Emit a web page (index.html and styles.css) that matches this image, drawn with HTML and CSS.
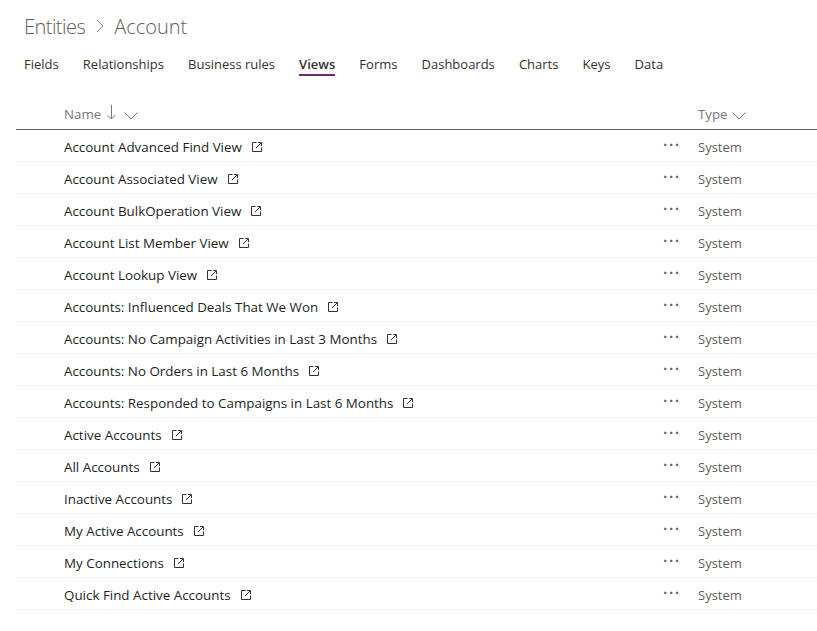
FILE: index.html
```html
<!doctype html>
<html>
<head>
<meta charset="utf-8">
<title>Account views</title>
<link rel="stylesheet" href="styles.css">
</head>
<body>
<svg class="defs" width="0" height="0">
  <symbol id="open-icon" viewBox="0 0 10 10"><path d="M4.500.5H.5v9h9V5.500M4 6 9 1M6 .5h3.500V4" /></symbol>
</svg>
<div id="wrapper">
  <h1 class="crumbs">
    <span class="crumb-first">Entities</span>
    <svg class="crumb-sep" width="8" height="14" viewBox="0 0 8 14"><path d="M1 1l6 6-6 6" /></svg>
    <span>Account</span>
  </h1>

  <ul class="tabs">
    <li>Fields</li>
    <li>Relationships</li>
    <li>Business rules</li>
    <li class="active">Views</li>
    <li>Forms</li>
    <li>Dashboards</li>
    <li>Charts</li>
    <li>Keys</li>
    <li>Data</li>
  </ul>

  <div class="head">
    <div class="col-name">
      <span>Name</span>
      <svg class="sort" width="9" height="16" viewBox="0 0 9 16"><path d="M4.500 1v14M.5 11l4 4 4-4" /></svg>
      <svg class="chev" width="14" height="8" viewBox="0 0 14 8"><path d="M.5.500 7 7 13.500.500" /></svg>
    </div>
    <div class="col-type">
      <span>Type</span>
      <svg class="chev" width="14" height="8" viewBox="0 0 14 8"><path d="M.5.500 7 7 13.500.500" /></svg>
    </div>
  </div>

  <ul class="rows">
    <li class="row"><span class="col-name"><span>Account Advanced Find View</span><svg class="open"><use href="#open-icon" /></svg></span><span class="more">···</span><span class="col-type">System</span></li>
    <li class="row"><span class="col-name"><span>Account Associated View</span><svg class="open"><use href="#open-icon" /></svg></span><span class="more">···</span><span class="col-type">System</span></li>
    <li class="row"><span class="col-name"><span>Account BulkOperation View</span><svg class="open"><use href="#open-icon" /></svg></span><span class="more">···</span><span class="col-type">System</span></li>
    <li class="row"><span class="col-name"><span>Account List Member View</span><svg class="open"><use href="#open-icon" /></svg></span><span class="more">···</span><span class="col-type">System</span></li>
    <li class="row"><span class="col-name"><span>Account Lookup View</span><svg class="open"><use href="#open-icon" /></svg></span><span class="more">···</span><span class="col-type">System</span></li>
    <li class="row"><span class="col-name"><span>Accounts: Influenced Deals That We Won</span><svg class="open"><use href="#open-icon" /></svg></span><span class="more">···</span><span class="col-type">System</span></li>
    <li class="row"><span class="col-name"><span>Accounts: No Campaign Activities in Last 3 Months</span><svg class="open"><use href="#open-icon" /></svg></span><span class="more">···</span><span class="col-type">System</span></li>
    <li class="row"><span class="col-name"><span>Accounts: No Orders in Last 6 Months</span><svg class="open"><use href="#open-icon" /></svg></span><span class="more">···</span><span class="col-type">System</span></li>
    <li class="row"><span class="col-name"><span>Accounts: Responded to Campaigns in Last 6 Months</span><svg class="open"><use href="#open-icon" /></svg></span><span class="more">···</span><span class="col-type">System</span></li>
    <li class="row"><span class="col-name"><span>Active Accounts</span><svg class="open"><use href="#open-icon" /></svg></span><span class="more">···</span><span class="col-type">System</span></li>
    <li class="row"><span class="col-name"><span>All Accounts</span><svg class="open"><use href="#open-icon" /></svg></span><span class="more">···</span><span class="col-type">System</span></li>
    <li class="row"><span class="col-name"><span>Inactive Accounts</span><svg class="open"><use href="#open-icon" /></svg></span><span class="more">···</span><span class="col-type">System</span></li>
    <li class="row"><span class="col-name"><span>My Active Accounts</span><svg class="open"><use href="#open-icon" /></svg></span><span class="more">···</span><span class="col-type">System</span></li>
    <li class="row"><span class="col-name"><span>My Connections</span><svg class="open"><use href="#open-icon" /></svg></span><span class="more">···</span><span class="col-type">System</span></li>
    <li class="row"><span class="col-name"><span>Quick Find Active Accounts</span><svg class="open"><use href="#open-icon" /></svg></span><span class="more">···</span><span class="col-type">System</span></li>
  </ul>
</div>
</body>
</html>
```

FILE: styles.css
```css
html, body { margin:0; padding:0; background:#fff; }
body { font-family:"Open Sans", "Noto Sans", sans-serif; font-size:13px; color:#252423; overflow:hidden; }
ul { margin:0; padding:0; list-style:none; }
svg { fill:none; stroke:currentColor; stroke-width:1; }
.defs { display:block; }
#wrapper { padding:12px 0 0 16px; }

.crumbs { display:flex; align-items:center; margin:0 0 0 8px; height:28px; font-size:20px; font-weight:300; color:#605e5c; }
.crumb-first { letter-spacing:-.55px; }
.crumb-sep { margin:0 10px 0 11px; color:#8a8886; }

.tabs { display:flex; gap:24.100px; margin:10px 0 0 8px; color:#323130; }
.tabs li { height:26px; line-height:28px; box-sizing:border-box; }
.tabs .active { font-weight:600; border-bottom:2px solid #742774; }

.head { display:flex; height:39px; margin-top:14px; border-bottom:1px solid #605e5c; font-size:13.300px; color:#797775; }
.head .col-name, .head .col-type { padding-top:8px; }
.head .sort { margin:0 8px 4px 6px; }
.head .chev { margin:4px 0 0; }
.head .col-type .chev { margin-left:4px; }
.col-name { flex:1; display:flex; align-items:center; padding-left:48px; white-space:nowrap; }
.col-type { width:119px; display:flex; align-items:center; }

.row { display:flex; align-items:center; height:29px; padding-top:2px; border-bottom:1px solid #f3f2f1; }
.row .col-name { font-size:13.380px; color:#201f1e; }
.row .col-type { font-size:13px; color:#605e5c; }
.open { width:10px; height:10px; margin:1px 0 0 10px; color:#323130; }
.more { width:35px; margin-top:-4px; font-size:16px; font-weight:600; letter-spacing:1.500px; color:#605e5c; }
```
